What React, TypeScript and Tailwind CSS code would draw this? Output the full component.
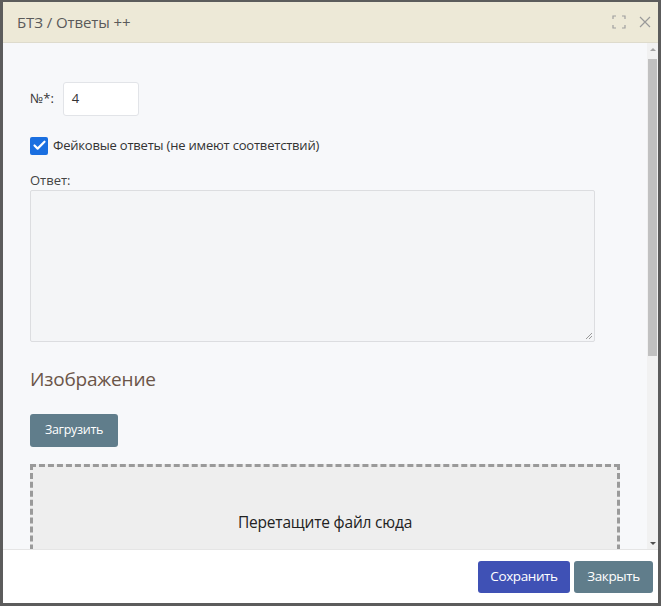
import { Check } from "lucide-react";

export default function App() {
  return (
    <div
      className="w-[661px] h-[606px] bg-[#5c5c5c] pt-[2px] pl-[3px] pr-[3px] pb-[3px]"
      style={{ fontFamily: '"Open Sans", "Noto Sans", sans-serif' }}
    >
      <div className="h-full flex flex-col bg-white">
        {/* Header */}
        <div className="h-[41px] shrink-0 bg-[#ede9d7] border-b border-[#dedbcc] flex items-center justify-between pl-[14px] pr-[7px]">
          <span className="text-[15px] text-[#5a5a5a] tracking-[-0.1px]">БТЗ / Ответы ++</span>
          <div className="flex items-center gap-[13px]">
            <svg width="14" height="14" viewBox="0 0 14 14" fill="none" stroke="#a0a0a0" strokeWidth="1.2">
              <path d="M1 4V1h3M10 1h3v3M13 10v3h-3M4 13H1v-3" />
            </svg>
            <svg width="12" height="12" viewBox="0 0 12 12" fill="none" stroke="#9a9a9a" strokeWidth="1.2">
              <path d="M1 1l10 10M11 1L1 11" />
            </svg>
          </div>
        </div>

        {/* Body */}
        <div className="flex-1 flex min-h-0 bg-[#f7f8fa]">
          <div className="flex-1 overflow-hidden pl-[27px] pt-[39px]">
            <div className="flex items-center gap-[9px]">
              <span className="text-[13px] text-[#333]">№*:</span>
              <div className="w-[76px] h-[34px] bg-white border border-[#e2e4e8] rounded-[3px] flex items-center pl-[8px] text-[13px] text-[#333]">
                4
              </div>
            </div>

            <div className="flex items-center gap-[5px] mt-[20px]">
              <div className="w-[18px] h-[18px] rounded-[2px] bg-[#1a6fe0] flex items-center justify-center">
                <Check size={15} strokeWidth={3.5} color="white" />
              </div>
              <span className="text-[13px] text-[#333] tracking-[-0.2px]">Фейковые ответы (не имеют соответствий)</span>
            </div>

            <div className="mt-[15px] text-[13px] text-[#444] leading-[18px]">Ответ:</div>
            <div className="relative mt-[1px] w-[565px] h-[152px] bg-[#f4f5f7] border border-[#dcdde0] rounded-[2px]">
              <svg className="absolute right-[1px] bottom-[1px]" width="8" height="8" viewBox="0 0 8 8" stroke="#999" strokeWidth="1">
                <path d="M7 1L1 7M7 4L4 7" />
              </svg>
            </div>

            <div className="mt-[25px] text-[19px] text-[#6b5548] leading-[24px] tracking-[-0.2px]">Изображение</div>

            <div className="mt-[23px] w-[88px] h-[33px] bg-[#607d8b] rounded-[3px] flex items-center justify-center text-[12.5px] text-white tracking-[-0.3px]">
              Загрузить
            </div>

            <div className="mt-[17px] w-[590px] h-[140px] bg-[#eeeeee] border-[3px] border-dashed border-[#9a9a9a] flex justify-center pt-[44px]">
              <span className="text-[15.5px] text-[#222] tracking-[-0.2px]">Перетащите файл сюда</span>
            </div>
          </div>

          {/* Scrollbar */}
          <div className="w-[11px] shrink-0 bg-[#f1f1f1] flex flex-col items-center">
            <div className="h-[12px] flex items-center justify-center">
              <div className="w-0 h-0 border-l-[3px] border-r-[3px] border-b-[3px] border-l-transparent border-r-transparent border-b-[#a3a3a3]" />
            </div>
            <div className="w-[9px] h-[297px] bg-[#c1c1c1] mt-[4px]" />
            <div className="flex-1" />
            <div className="h-[12px] flex items-center justify-center">
              <div className="w-0 h-0 border-l-[3px] border-r-[3px] border-t-[3px] border-l-transparent border-r-transparent border-t-[#505050]" />
            </div>
          </div>
        </div>

        {/* Footer */}
        <div className="h-[54px] shrink-0 bg-white border-t border-[#e5e5e5] flex items-center justify-end gap-[4px] pr-[5px]">
          <div className="w-[92px] h-[32px] bg-[#3f51b5] rounded-[3px] flex items-center justify-center text-[13.5px] text-white tracking-[-0.4px]">
            Сохранить
          </div>
          <div className="w-[79px] h-[32px] bg-[#607d8b] rounded-[3px] flex items-center justify-center text-[13.5px] text-white tracking-[-0.4px]">
            Закрыть
          </div>
        </div>
      </div>
    </div>
  );
}
